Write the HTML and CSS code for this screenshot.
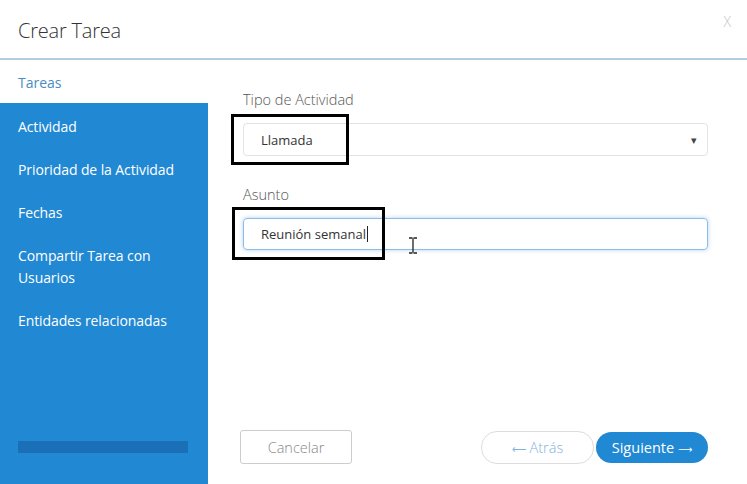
FILE: index.html
```html
<!DOCTYPE html>
<html lang="es">
<head>
  <meta charset="UTF-8">
  <title>Crear Tarea</title>
  <link rel="stylesheet" href="styles.css">
</head>
<body>

  <div class="modal">
    <div class="modal-header">
      <h2>Crear Tarea</h2>
      <span class="close">X</span>
    </div>

    <div class="modal-body">
      <div class="sidebar">
        <div class="sidebar-title">Tareas</div>
        <ul class="steps">
          <li>Actividad</li>
          <li>Prioridad de la Actividad</li>
          <li>Fechas</li>
          <li>Compartir Tarea con Usuarios</li>
          <li>Entidades relacionadas</li>
        </ul>
        <div class="progress"></div>
      </div>

      <div class="content">
        <div class="field">
          <label>Tipo de Actividad</label>
          <div class="select">
            <span>Llamada</span>
            <span class="arrow">&#9662;</span>
          </div>
          <div class="mark mark-select"></div>
        </div>

        <div class="field">
          <label>Asunto</label>
          <div class="input">
            <span>Reunión semanal</span><span class="caret"></span>
          </div>
          <div class="mark mark-input"></div>
          <svg class="ibeam" width="10" height="17" viewBox="0 0 10 17">
            <path d="M1 1h3.5M5.5 1H9M5 1.5v14M1 16h3.5M5.5 16H9" stroke="#222" stroke-width="1.3" fill="none"/>
          </svg>
        </div>

        <div class="actions">
          <button class="btn btn-cancel">Cancelar</button>
          <div class="nav">
            <button class="btn btn-back"><span class="arr">&#10229;</span> Atrás</button>
            <button class="btn btn-next">Siguiente <span class="arr">&#10230;</span></button>
          </div>
        </div>
      </div>
    </div>
  </div>

</body>
</html>
```

FILE: styles.css
```css
body {
  margin: 0;
  font-family: "Open Sans", Arial, sans-serif;
  background: white;
  color: #444;
}
.modal {
  width: 747px;
  height: 484px;
  display: flex;
  flex-direction: column;
}
.modal-header {
  height: 58px;
  border-bottom: 2px solid #b3cde0;
  display: flex;
  align-items: center;
  justify-content: space-between;
  padding: 0 16px 0 18px;
}
.modal-header h2 {
  margin: 0;
  font-size: 20px;
  font-weight: 300;
  color: #333;
  letter-spacing: -0.2px;
  position: relative;
  top: 1px;
}
.close {
  font-size: 14px;
  font-weight: 300;
  color: #c4c4c4;
  position: relative;
  top: -8px;
}
.modal-body {
  flex: 1;
  display: flex;
}
.sidebar {
  width: 208px;
  display: flex;
  flex-direction: column;
}
.sidebar-title {
  height: 43px;
  line-height: 45px;
  padding-left: 18px;
  font-size: 14px;
  color: #4b8bc2;
}
.steps {
  list-style: none;
  margin: 0;
  padding: 13px 8px 0 18px;
  background: #2188d3;
  flex: 1;
  display: flex;
  flex-direction: column;
  gap: 21px;
}
.steps li {
  color: white;
  font-size: 14px;
  line-height: 22px;
  letter-spacing: -0.1px;
}
.steps li:nth-child(4) {
  padding-right: 30px;
}
.progress {
  background: #2188d3;
  height: 43px;
}
.progress::before {
  content: "";
  display: block;
  margin: 0 20px 0 18px;
  height: 12px;
  background: #1a6fb6;
}
.content {
  flex: 1;
  display: flex;
  flex-direction: column;
  padding: 30px 39px 20px 35px;
}
.field {
  position: relative;
  margin-bottom: 29px;
}
.field label {
  display: block;
  font-size: 14.5px;
  font-weight: 300;
  line-height: 20px;
  color: #555;
  margin-bottom: 13px;
}
.select, .input {
  box-sizing: border-box;
  display: flex;
  align-items: center;
  padding: 0 10px 0 17px;
  font-size: 13px;
  color: #333;
  border-radius: 4px;
}
.select {
  height: 33px;
  border: 1px solid #e3e3e3;
  justify-content: space-between;
}
.arrow {
  font-size: 11px;
  color: #444;
}
.input {
  height: 32px;
  border: 1px solid #8cbde8;
  box-shadow: 0 0 4px rgba(102, 170, 230, 0.5);
}
.caret {
  display: inline-block;
  width: 1px;
  height: 16px;
  background: #222;
  margin-left: 1px;
}
.mark {
  position: absolute;
  border: 3px solid #000;
  box-sizing: border-box;
}
.mark-select {
  left: -12px;
  top: 24px;
  width: 118px;
  height: 51px;
}
.mark-input {
  left: -11px;
  top: 22px;
  width: 153px;
  height: 53px;
}
.ibeam {
  position: absolute;
  left: 165px;
  top: 52px;
}
.actions {
  margin-top: auto;
  display: flex;
  justify-content: space-between;
  align-items: center;
}
.nav {
  display: flex;
  gap: 2px;
  align-items: center;
}
.btn {
  font-family: "Open Sans", Arial, sans-serif;
  font-size: 14.5px;
  font-weight: 300;
  background: white;
  cursor: pointer;
}
.arr {
  font-family: "DejaVu Sans", sans-serif;
  font-size: 10px;
}
.btn-cancel {
  width: 112px;
  height: 34px;
  margin-left: -3px;
  border: 1px solid #ccc;
  border-radius: 3px;
  color: #888;
}
.btn-back {
  width: 113px;
  height: 33px;
  border: 1px solid #ddd;
  border-radius: 16px;
  color: #7fb3df;
}
.btn-next {
  width: 112px;
  height: 31px;
  border: none;
  border-radius: 16px;
  background: #2188d3;
  color: white;
  font-weight: 400;
}
```
